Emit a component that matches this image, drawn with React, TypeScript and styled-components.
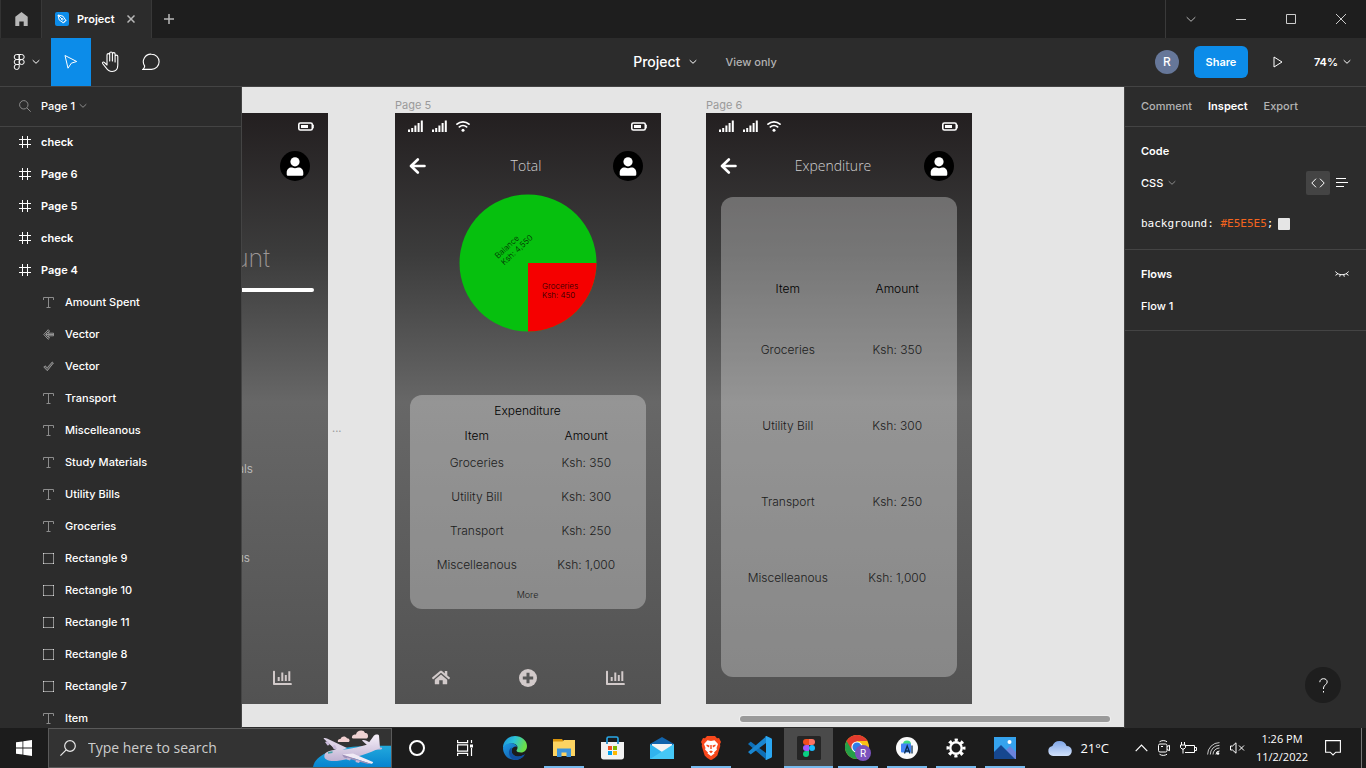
import React from "react";
import styled, { createGlobalStyle, css } from "styled-components";

const GlobalStyle = createGlobalStyle`
  *, *::before, *::after { box-sizing: border-box; }
  body { margin: 0; background: #2c2c2c; }
  button, input, select { font: inherit; color: inherit; margin: 0; }
  svg { display: block; flex: none; }
`;

const plainButton = css`
  border: 0;
  padding: 0;
  background: none;
  display: flex;
  align-items: center;
  justify-content: center;
  cursor: default;
`;

const Shell = styled.div`
  height: 100vh;
  display: flex;
  flex-direction: column;
  overflow: hidden;
  color: #fff;
  font-family: Inter, "Liberation Sans", sans-serif;
  font-size: 11px;
  line-height: 16px;
`;

/* ---------- title bar ---------- */

const TitleBar = styled.header`
  flex: none;
  height: 38px;
  display: flex;
  background: #1e1e1e;
  color: #b8b8b8;
`;

const HomeTab = styled.button`
  ${plainButton}
  width: 42px;
  background: #222;
  border-left: 1px solid #333;
  border-right: 1px solid #383838;
`;

const FileTab = styled.div`
  width: 110px;
  display: flex;
  align-items: center;
  gap: 8px;
  padding-left: 13px;
  background: #2c2c2c;
  border-right: 1px solid #383838;
  color: #fff;
  font-weight: 600;
`;

const TabClose = styled.button`
  ${plainButton}
  width: 16px;
  height: 16px;
  color: #b8b8b8;
`;

const NewTab = styled.button`
  ${plainButton}
  width: 34px;
`;

const WindowControls = styled.div`
  margin-left: auto;
  display: flex;
  border-left: 1px solid #3a3a3a;
`;

const WindowButton = styled.button`
  ${plainButton}
  width: 50px;
`;

/* ---------- toolbar ---------- */

const Toolbar = styled.nav`
  flex: none;
  height: 49px;
  display: flex;
  background: #2c2c2c;
  border-bottom: 1px solid #444;
`;

const ToolButton = styled.button<{ $active?: boolean; $wide?: boolean }>`
  ${plainButton}
  width: ${(p) => (p.$wide ? 51 : 40)}px;
  padding-left: ${(p) => (p.$wide ? 2 : 0)}px;
  gap: 6px;
  background: ${(p) => (p.$active ? "#0c8ce9" : "transparent")};
`;

const FileTitle = styled.div`
  flex: 1;
  display: flex;
  align-items: center;
  justify-content: center;
  padding-left: 84px;
  gap: 28px;
  color: #b3b3b3;
  font-weight: 500;
`;

const FileName = styled.button`
  ${plainButton}
  gap: 9px;
  color: #fff;
  font-size: 14px;
`;

const ToolbarEnd = styled.div`
  display: flex;
  align-items: center;
  padding-right: 15px;
`;

const UserBadge = styled.span`
  width: 24px;
  height: 24px;
  border-radius: 50%;
  background: #667799;
  font-size: 12px;
  line-height: 24px;
  font-weight: 500;
  text-align: center;
`;

const ShareButton = styled.button`
  ${plainButton}
  width: 54px;
  height: 32px;
  margin-left: 15px;
  border-radius: 6px;
  background: #0c8ce9;
  font-weight: 600;
`;

const PlayButton = styled.button`
  ${plainButton}
  width: 60px;
  height: 32px;
`;

const ZoomButton = styled.button`
  ${plainButton}
  margin-left: 6px;
  gap: 5px;
  font-weight: 600;
`;

/* ---------- workspace ---------- */

const Workspace = styled.main`
  flex: 1;
  min-height: 0;
  display: flex;
`;

const Layers = styled.aside`
  flex: none;
  width: 242px;
  overflow: hidden;
  background: #2c2c2c;
  border-right: 1px solid #444;
`;

const LayersHeader = styled.div`
  height: 40px;
  display: flex;
  align-items: center;
  gap: 10px;
  padding: 0 0 2px 19px;
  border-bottom: 1px solid #444;
`;

const PagePicker = styled.button`
  ${plainButton}
  gap: 4px;
  font-weight: 500;
`;

const LayerList = styled.ul`
  margin: 0;
  padding: 0;
  list-style: none;
`;

const LayerRow = styled.li<{ $top?: boolean }>`
  height: 32px;
  display: flex;
  align-items: center;
  gap: ${(p) => (p.$top ? 10 : 11)}px;
  padding: 0 0 2px ${(p) => (p.$top ? 19 : 43)}px;
  font-weight: ${(p) => (p.$top ? 600 : 500)};
`;

const Canvas = styled.section`
  flex: 1;
  min-width: 0;
  position: relative;
  overflow: hidden;
  background: #e5e5e5;
  border-bottom: 1px solid #2c2c2c;
`;

/* Frames sit at free positions on the design canvas. */
const Placed = styled.div<{ $x: number; $y: number }>`
  position: absolute;
  left: ${(p) => p.$x}px;
  top: ${(p) => p.$y}px;
`;

const FrameLabel = styled.div`
  height: 16px;
  color: #9a9a9a;
  line-height: 16px;
`;

const Frame = styled.article`
  width: 266px;
  height: 591px;
  display: flex;
  flex-direction: column;
  background: linear-gradient(180deg, #231f20 0%, #3c3c3c 24%, #676767 49%, #525252 100%);
  color: #fff;
  font-size: 12px;
`;

const StatusBar = styled.div`
  height: 26px;
  display: flex;
  align-items: center;
  gap: 9px;
  padding: 0 14px 0 13px;
`;

const Battery = styled.svg`
  margin-left: auto;
`;

const FrameHeader = styled.div`
  height: 54px;
  display: grid;
  grid-template-columns: 30px 1fr 30px;
  align-items: center;
  padding: 0 18px 0 14px;
  color: #fff;
`;

const FrameTitle = styled.div<{ $long?: boolean }>`
  padding-right: ${(p) => (p.$long ? 8 : 0)}px;
  color: #d0d0d0;
  font-family: "Open Sans", "Noto Sans", sans-serif;
  font-size: 14px;
  font-weight: 300;
  text-align: center;
`;

const PieBox = styled.div`
  display: flex;
  justify-content: center;
  padding-top: 1px;
`;

const Card = styled.div<{ $tall?: boolean }>`
  margin: ${(p) => (p.$tall ? 4 : 63)}px 15px 0;
  padding: ${(p) => (p.$tall ? "69px 5px 61px 12px" : "0 5px 0 12px")};
  border-radius: 12px;
  background: rgba(255, 255, 255, 0.3);
  color: #1c1c1c;
`;

const CardTable = styled.table<{ $tall?: boolean }>`
  width: 100%;
  table-layout: fixed;
  border-collapse: collapse;
  text-align: center;
  font-weight: 300;
  line-height: 16px;

  caption { height: 31px; padding-right: 8px; line-height: 31px; color: #000; }
  th, td { padding: 0; vertical-align: middle; }
  th { height: ${(p) => (p.$tall ? 46 : 20)}px; font-weight: 300; color: #000; }
  td { height: ${(p) => (p.$tall ? 76 : 34)}px; }
`;

const MoreLink = styled.a`
  display: block;
  height: 27px;
  padding-right: 8px;
  color: inherit;
  font-size: 9px;
  font-weight: 300;
  line-height: 25px;
  text-align: center;
  text-decoration: none;
`;

const FrameNav = styled.div`
  margin-top: auto;
  height: 36px;
  display: flex;
  justify-content: space-between;
  padding: 0 36px 0 37px;
  color: #d2caca;
`;

const Amount = styled.div`
  margin-top: 40px;
  height: 50px;
  padding-right: 58px;
  color: #9c9696;
  font-size: 25px;
  font-weight: 200;
  line-height: 50px;
  text-align: right;
`;

const Rule = styled.div`
  height: 4px;
  margin: 5px 14px 0;
  border-radius: 2px;
  background: #fff;
`;

const Category = styled.div<{ $first?: boolean }>`
  margin-top: ${(p) => (p.$first ? 167 : 69)}px;
  height: 20px;
  padding-right: ${(p) => (p.$first ? 75 : 78)}px;
  color: #c4c4c4;
  font-weight: 300;
  line-height: 20px;
  text-align: right;
`;

const ScrollThumb = styled.div`
  position: absolute;
  right: 14px;
  bottom: 5px;
  width: 42%;
  height: 6px;
  border-radius: 3px;
  background: #9a9a9a;
  box-shadow: 0 0 0 1px #eee;
`;

/* ---------- inspector ---------- */

const Inspector = styled.aside`
  flex: none;
  position: relative;
  width: 242px;
  background: #2c2c2c;
  border-left: 1px solid #444;
`;

const Tabs = styled.div`
  height: 40px;
  display: flex;
  align-items: center;
  gap: 16px;
  padding: 0 16px 2px;
  border-bottom: 1px solid #444;
`;

const Tab = styled.button<{ $active?: boolean }>`
  ${plainButton}
  color: ${(p) => (p.$active ? "#fff" : "#b3b3b3")};
  font-weight: ${(p) => (p.$active ? 600 : 500)};
`;

const Section = styled.section`
  padding: 8px 12px 8px 16px;
  border-bottom: 1px solid #444;
`;

const SectionRow = styled.div<{ $code?: boolean }>`
  height: ${(p) => (p.$code ? 42 : 32)}px;
  display: flex;
  align-items: ${(p) => (p.$code ? "flex-end" : "center")};
  padding-bottom: ${(p) => (p.$code ? 9 : 0)}px;
  font-weight: 500;
`;

const SectionTitle = styled.h2`
  margin: 0 auto 0 0;
  font-size: 11px;
  line-height: 16px;
  font-weight: 600;
`;

const LanguageSelect = styled.select`
  appearance: none;
  border: 0;
  padding: 0;
  width: 27px;
  background: none;
`;

const ViewToggle = styled.button<{ $active?: boolean }>`
  ${plainButton}
  width: 24px;
  height: 24px;
  border-radius: 2px;
  background: ${(p) => (p.$active ? "#444" : "transparent")};
`;

const HiddenToggle = styled.button`
  ${plainButton}
  width: 24px;
  height: 24px;
`;

const Spacer = styled.div`
  flex: 1;
`;

const Code = styled.code`
  font-family: "DejaVu Sans Mono", "Liberation Mono", monospace;
  font-size: 11px;
  line-height: 16px;
  font-weight: 400;
`;

const CodeValue = styled.span`
  color: #f4641e;
`;

const Swatch = styled.span`
  width: 12px;
  height: 12px;
  margin: 0 0 2px 5px;
  border-radius: 1px;
  background: #e5e5e5;
`;

const HelpButton = styled.button`
  ${plainButton}
  position: absolute;
  right: 25px;
  bottom: 25px;
  width: 36px;
  height: 36px;
  border-radius: 50%;
  background: #1e1e1e;
`;

/* ---------- taskbar ---------- */

const Taskbar = styled.footer`
  flex: none;
  height: 40px;
  display: flex;
  background: #1c1c1c;
  font-family: "Open Sans", "Noto Sans", sans-serif;
`;

const StartButton = styled.button`
  ${plainButton}
  width: 48px;
`;

const SearchBox = styled.label`
  width: 344px;
  display: flex;
  align-items: center;
  gap: 12px;
  padding-left: 11px;
  background: #333;
  border: 1px solid #5a5a5a;
`;

const SearchInput = styled.input`
  flex: 1;
  min-width: 0;
  border: 0;
  padding: 0;
  outline: 0;
  background: none;
  font-size: 14px;
  line-height: 20px;
  &::placeholder { color: #cdcdcd; opacity: 1; }
`;

const TaskButton = styled.button<{ $running?: boolean; $active?: boolean }>`
  ${plainButton}
  position: relative;
  width: 49px;
  background: ${(p) => (p.$active ? "#4a4a4a" : "transparent")};
  &::after {
    content: "";
    position: absolute;
    bottom: 0;
    left: ${(p) => (p.$active ? 0 : 5)}px;
    right: ${(p) => (p.$active ? 0 : 4)}px;
    height: 2px;
    background: ${(p) => (p.$running || p.$active ? "#76b9ed" : "transparent")};
  }
`;

const Tray = styled.div`
  margin-left: auto;
  display: flex;
  align-items: center;
`;

const Weather = styled.button`
  ${plainButton}
  gap: 8px;
  margin-right: 26px;
  font-size: 13px;
`;

const TrayIcons = styled.div`
  width: 110px;
  display: flex;
  align-items: center;
  justify-content: space-between;
`;

const Clock = styled.time`
  width: 74px;
  text-align: center;
  font-size: 11px;
  line-height: 18px;
`;

const Notifications = styled.button`
  ${plainButton}
  width: 43px;
  height: 40px;
  border-right: 1px solid #777;
  padding-right: 14px;
  margin-right: 4px;
`;

/* ---------- icons ---------- */

const Chevron = ({ color = "#fff", w = 8 }: { color?: string; w?: number }) => (
  <svg width={w} height={w / 2 + 2} viewBox={`0 0 ${w} ${w / 2 + 2}`} fill="none" stroke={color}>
    <path d={`M.7 1.2 L${w / 2} ${w / 2 + 0.3} L${w - 0.7} 1.2`} />
  </svg>
);

const HashIcon = () => (
  <svg width="12" height="12" viewBox="0 0 12 12" stroke="#fff" fill="none">
    <path d="M3.5 0v12M8.5 0v12M0 3.5h12M0 8.5h12" />
  </svg>
);

const TextIcon = () => (
  <svg width="11" height="11" viewBox="0 0 11 11" stroke="#8c8c8c" fill="none">
    <path d="M.5 3V.5h10V3M5.5.5v10M3.5 10.5h4" />
  </svg>
);

const RectIcon = () => (
  <svg width="11" height="11" viewBox="0 0 11 11" stroke="#8f8f8f" fill="none">
    <path d="M.5.5h10v10H.5z" />
    <path d="M0 .5h1M10 .5h1M0 10.5h1M10 10.5h1" stroke="#ddd" />
  </svg>
);

const ArrowVectorIcon = () => (
  <svg width="11" height="11" viewBox="0 0 11 11" stroke="#a0a0a0" fill="none" strokeWidth=".9">
    <path d="M5.200.700.800 5.500l4.400 4.800 1.300-1.300-1.700-2.200H10.500V4.200H4.800l1.700-2.200z" />
    <path d="M3 5.500h7M5.300 2.500 2.600 5.500l2.700 3" />
  </svg>
);

const CheckVectorIcon = () => (
  <svg width="11" height="11" viewBox="0 0 11 11" stroke="#a0a0a0" fill="#555" strokeWidth=".9">
    <path d="M.8 6 2 4.800l2.200 2L9.300 1l1.100 1L4.300 9.700z" />
  </svg>
);

const Signal = () => (
  <svg width="15" height="12" viewBox="0 0 15 12" fill="#fff">
    <path d="M0 9.500h2V12H0zM3.200 8h2v4h-2zM6.400 5.500h2V12h-2zM9.600 3h2v9h-2zM12.800.500h2V12h-2z" />
  </svg>
);

const Wifi = () => (
  <svg width="14" height="12" viewBox="0 0 14 12" fill="none" stroke="#fff" strokeWidth="1.700" strokeLinecap="round">
    <path d="M1 4.200a8.800 8.800 0 0 1 12 0M3.400 6.900a5.300 5.300 0 0 1 7.200 0" />
    <circle cx="7" cy="10.200" r="1.500" fill="#fff" stroke="none" />
  </svg>
);

const BatteryIcon = () => (
  <Battery width="16" height="9" viewBox="0 0 16 9">
    <rect x=".8" y="1" width="13.500" height="7" rx="1.600" fill="none" stroke="#fff" strokeWidth="1.600" />
    <rect x="3" y="3" width="7" height="3" fill="#fff" />
    <rect x="14" y="2.500" width="1.800" height="4" rx=".8" fill="#fff" />
  </Battery>
);

const BackIcon = () => (
  <svg width="17" height="16" viewBox="0 0 17 16" fill="none" stroke="#fff" strokeWidth="2.600" strokeLinecap="round" strokeLinejoin="round">
    <path d="M8.800 1.500 2 8l6.800 6.500M2.500 8h13" />
  </svg>
);

const AvatarIcon = () => (
  <svg width="30" height="30" viewBox="0 0 30 30">
    <circle cx="15" cy="15" r="15" fill="#000" />
    <circle cx="15" cy="10.800" r="4.600" fill="#fff" />
    <path d="M6.700 21.500c0-3 2.200-5 4.600-5 1.200 0 2 .7 3.700.7s2.500-.7 3.700-.7c2.400 0 4.600 2 4.600 5v1.700c0 1-.7 1.600-1.700 1.600H8.400c-1 0-1.700-.6-1.700-1.600z" fill="#fff" />
  </svg>
);

const HouseIcon = () => (
  <svg width="18" height="20" viewBox="0 0 18 20" fill="currentColor">
    <path d="M9 6.600 2.800 11.700v4c0 .4.200.6.600.6h3.800v-4h3.500v4h3.900c.4 0 .6-.2.6-.6v-4z" />
    <path d="M17.800 9.600 15.300 7.500V3.400c0-.3-.1-.4-.4-.4h-1.700c-.3 0-.4.100-.4.400v2L10 3c-.6-.5-1.400-.5-2 0L.2 9.600c-.2.200-.2.400-.1.600l.8 1c.2.200.4.200.6 0L8.700 5.100c.2-.1.400-.1.600 0l7.200 6.100c.2.200.4.200.6 0l.8-1c.2-.2.100-.4-.1-.6z" />
  </svg>
);

const AddIcon = () => (
  <svg width="18" height="20" viewBox="0 0 18 20">
    <circle cx="9" cy="10" r="9" fill="currentColor" />
    <path d="M9 4.800v10.400M3.800 10h10.400" stroke="#575757" strokeWidth="3" />
  </svg>
);

const ChartIcon = () => (
  <svg width="19" height="20" viewBox="0 0 19 20" fill="currentColor">
    <path d="M0 3.500c0-.5.300-.7.700-.7h.600c.4 0 .7.200.7.700v11.600h16c.5 0 .8.300.8.700v.600c0 .5-.3.700-.8.700H1.200c-.7 0-1.200-.5-1.200-1.200z" />
    <path d="M4.700 9h2v4h-2zM8.300 4.500h2V13h-2zM11.800 7h2v6h-2zM15.300 3.200h2V13h-2z" />
  </svg>
);

const Pie = () => (
  <svg width="138" height="138" viewBox="0 0 138 138" fontFamily="Inter, sans-serif" fontSize="8" fontWeight="300">
    <circle cx="69" cy="69" r="68.500" fill="#06c00e" />
    <path d="M69 69h68.500A68.500 68.500 0 0 1 69 137.500z" fill="#f50000" />
    <g transform="translate(39 65) rotate(-43)">
      <text fill="#022503">Balance</text>
      <text y="9" fill="#022503">Ksh: 4,550</text>
    </g>
    <text x="83" y="95" fill="#1c0000">Groceries</text>
    <text x="83" y="104" fill="#1c0000">Ksh: 450</text>
  </svg>
);

const Plane = () => (
  <svg width="78" height="38" viewBox="0 0 78 38">
    <defs>
      <linearGradient id="sea" x1="0" y1="0" x2="0" y2="1">
        <stop offset="0" stopColor="#22a9dc" />
        <stop offset="1" stopColor="#0784d0" />
      </linearGradient>
      <linearGradient id="fuselage" x1="0" y1="0" x2="0" y2="1">
        <stop offset="0" stopColor="#f7f1fa" />
        <stop offset="1" stopColor="#bfb1d2" />
      </linearGradient>
    </defs>
    <path d="M0 38C2 26 20 19 44 17.500c12-.8 24-.8 34-.8V38z" fill="url(#sea)" />
    <path d="M25 13c-1-2 1-3.500 2.500-3 .5-3 5-3.500 6.500-.8 3 0 3.500 3.800 1 3.800z" fill="#f0cfd0" />
    <path d="M39 9c-.500-3 2.500-4 4-3.500C43.500 1 51 0 52 4c3.500-1 4 5 1.500 5.500H40z" fill="#efd3d3" />
    <path d="M10.500 9.500c1-.8 2.500-.3 3.500 0L34 19l-9 4z" fill="#ddd2e6" />
    <path d="M12 13l3-1 1.500 4-2 .5zM19 17l3-1 2 4-3 .5z" fill="#c9bad9" />
    <path d="M68 18.500c1.500.3 1.500 1.500 0 2L56 21l-4-2z" fill="#c9bcda" />
    <path d="M11.500 26c1-3.500 6-5 12-5 10-.3 22-2.500 31-5.500L61 6.500c1-1.500 5-1.500 5 0L67 19c-10 5-25 10-40 12.500-9 1.500-17 0-15.500-5.500z" fill="url(#fuselage)" />
    <path d="M54 16 49 11.500c1-.8 3-.5 4 0l8 4z" fill="#e5dcee" />
    <path d="M29 25.500l11-1 20 8.500c.5 1-1 2-3 1.500z" fill="#f0eaf5" />
    <path d="M29 25.500l28 9-2 .5-24-6.500z" fill="#9d8fb8" />
    <path d="M15 23l4.500-.7v1.700l-4.500.8z" fill="#43a1a8" />
    <path d="M34 28.500l4 1-1 2-3.500-1zM43 31l4 1-1 2-3.500-1z" fill="#c6b8d6" />
  </svg>
);

const EdgeIcon = () => (
  <svg width="24" height="24" viewBox="0 0 24 24">
    <defs>
      <linearGradient id="edgeTop" x1="0" y1="0" x2="1" y2=".3">
        <stop offset="0" stopColor="#1b8fdc" />
        <stop offset=".5" stopColor="#2cc3d8" />
        <stop offset="1" stopColor="#6be048" />
      </linearGradient>
      <linearGradient id="edgeLow" x1="0" y1="0" x2="1" y2="1">
        <stop offset="0" stopColor="#1c9be6" />
        <stop offset="1" stopColor="#104a9a" />
      </linearGradient>
    </defs>
    <path d="M0 12C0 5 5.500 0 12 0s12 4.500 12 10c0 4-2.600 6.500-6 6.500-3 0-4.500-1-4.500-2 0-.8 1-1 1-3C14.500 9 12 7.500 9 7.500 4 7.500.5 11 0 12z" fill="url(#edgeTop)" />
    <path d="M0 12c.5-2.500 4-4.800 7.500-4.800 4 0 6.500 2 6.800 3.800C13 10 9 10.500 8.600 14.500c-.3 4 4 6.500 8.400 5.800 2-.3 4-1.500 5-2.300-1.500 3.500-5.500 6-10 6C5 24 0 18.500 0 12z" fill="url(#edgeLow)" />
    <path d="M8.600 14.500C8.200 18.500 12 21 16.500 20.400c2.200-.3 4-1.400 5-2.200-1.500 3.300-5 5.600-9 5.800-4-.8-7-4-6.500-8.500.2-1.500 1-3 2.700-4z" fill="#114f9f" />
  </svg>
);

const ExplorerIcon = () => (
  <svg width="22" height="20" viewBox="0 0 22 20">
    <path d="M0 1h9l2 3H0z" fill="#d9940c" />
    <path d="M0 3.500h9.500L11 2h11v16H0z" fill="#fcd462" />
    <path d="M4 19v-8.500h14V19h-4.500v-4.500h-5V19z" fill="#3b94dc" />
  </svg>
);

const StoreIcon = () => (
  <svg width="23" height="24" viewBox="0 0 23 24">
    <path d="M6 8V2.500C6 1.500 6.500 1 7.500 1h8c1 0 1.500.5 1.500 1.500V8" fill="none" stroke="#29a8e8" strokeWidth="1.600" />
    <path d="M0 6h23v15c0 1.500-1 2.500-2.500 2.500h-18C1 23.500 0 22.500 0 21z" fill="#f2f2f2" />
    <path d="M6 5.500V8M17 5.500V8" stroke="#1487c9" strokeWidth="1.600" />
    <path d="M7 10h4v4H7z" fill="#f25022" /><path d="M12 10h4v4h-4z" fill="#7fba00" />
    <path d="M7 15h4v4H7z" fill="#00a4ef" /><path d="M12 15h4v4h-4z" fill="#ffb900" />
  </svg>
);

const MailIcon = () => (
  <svg width="24" height="22" viewBox="0 0 24 22">
    <path d="M0 7 12 0l12 7v3H0z" fill="#1264ac" />
    <path d="M2 7h20v8H2z" fill="#f4f4f4" />
    <path d="M0 7l12 8 12-8v15H0z" fill="#31b4ee" />
    <path d="M0 22 24 7v15z" fill="#50d0fa" opacity=".7" />
  </svg>
);

const BraveIcon = () => (
  <svg width="20" height="24" viewBox="0 0 20 24">
    <path d="M6 0h8l2 2.300 2-.3 2 4-1 2 .3 2-2.800 9C16 20.500 12 23.500 10 24c-2-.5-6-3.500-6.500-5L.7 10 1 8 0 6l2-4 2 .3z" fill="#f8481c" />
    <path d="M10 5l3.500-.8L17 8l-1.500 4 .5 1.500-3 3 .5 1L10 20l-3.500-2.500.5-1-3-3 .5-1.500L3 8l3.500-3.800z" fill="#fff" />
    <path d="M5.500 8.500l3 1-.5 2-2.500-1.500zM14.500 8.500l-3 1 .5 2 2.500-1.500zM8 15.500l2-1 2 1-2 1.700zM9.300 9h1.400v4H9.300z" fill="#f8481c" />
  </svg>
);

const VsCodeIcon = () => (
  <svg width="24" height="24" viewBox="0 0 24 24">
    <path d="M0 8l2.200-2c.3-.3.700-.3 1 0L18 17v6.500z" fill="#0f70b8" />
    <path d="M0 16l2.200 2c.3.300.700.300 1 0L18 7V.500z" fill="#1a86d0" />
    <path d="M17 23.700c.6.400 1.200.4 1.800.1l4.400-2.100c.5-.2.800-.7.800-1.300V3.600c0-.6-.3-1.100-.8-1.300L18.800.2c-.6-.3-1.200-.3-1.800.1.600-.2 1 .2 1 .8v21.800c0 .6-.4 1-1 .8z" fill="#2aa7f2" />
  </svg>
);

const FigmaIcon = () => (
  <svg width="24" height="24" viewBox="0 0 24 24">
    <rect width="24" height="24" rx="1.500" fill="#252525" />
    <path d="M9 3h3v6H9a3 3 0 0 1 0-6z" fill="#f24e1e" />
    <path d="M12 3h3a3 3 0 0 1 0 6h-3z" fill="#ff7262" />
    <path d="M9 9h3v6H9a3 3 0 0 1 0-6z" fill="#a259ff" />
    <circle cx="15" cy="12" r="3" fill="#1abcfe" />
    <path d="M9 15h3v3a3 3 0 1 1-3-3z" fill="#0acf83" />
  </svg>
);

const ChromeIcon = () => (
  <svg width="26" height="26" viewBox="0 0 26 26">
    <circle cx="12" cy="12" r="12" fill="#fbc116" />
    <path d="M12 12 1.600 6A12 12 0 0 0 12 24l5-9z" fill="#259f48" />
    <path d="M1.600 6A12 12 0 0 1 22.400 6H12l-5 9z" fill="#e33b2e" />
    <circle cx="12" cy="12" r="5.600" fill="#fff" />
    <circle cx="12" cy="12" r="4.500" fill="#2f7de9" />
    <circle cx="18" cy="18" r="8" fill="#7b52bd" />
    <text x="18" y="22" textAnchor="middle" fontFamily="Roboto, sans-serif" fontSize="10" fill="#fff">R</text>
  </svg>
);

const AndroidStudioIcon = () => (
  <svg width="22" height="22" viewBox="0 0 22 22">
    <circle cx="11" cy="11" r="11" fill="#fafafa" />
    <path d="M7 7.500a4 4 0 0 1 8 0z" fill="#3ddc84" />
    <rect x="5" y="6.500" width="10" height="9" rx="1" fill="#4285f4" />
    <path d="M8.500 16.500 11.200 9l2.800 7.500M9.500 14h3.500M16 8.500v8" fill="none" stroke="#0b2e4f" strokeWidth="1.300" />
  </svg>
);

const GearIcon = () => (
  <svg width="20" height="20" viewBox="0 0 20 20" fill="none" stroke="#fff">
    <circle cx="10" cy="10" r="5.700" strokeWidth="2.400" />
    <circle cx="10" cy="10" r="8" strokeWidth="3" strokeDasharray="3.140 3.140" strokeDashoffset="1.570" />
  </svg>
);

const PhotosIcon = () => (
  <svg width="22" height="22" viewBox="0 0 22 22">
    <rect width="22" height="22" fill="#35a3ee" />
    <path d="M11 14 16 9l6 6v7H11z" fill="#6a83dc" />
    <path d="M0 15l7-7 14 14H0z" fill="#16478f" />
    <circle cx="15.500" cy="5" r="2" fill="#fff" />
  </svg>
);

/* ---------- data ---------- */

type Kind = "frame" | "text" | "arrow" | "check" | "rect";

const layerIcons: Record<Kind, React.FC> = {
  frame: HashIcon,
  text: TextIcon,
  arrow: ArrowVectorIcon,
  check: CheckVectorIcon,
  rect: RectIcon,
};

const layers: [Kind, string][] = [
  ["frame", "check"],
  ["frame", "Page 6"],
  ["frame", "Page 5"],
  ["frame", "check"],
  ["frame", "Page 4"],
  ["text", "Amount Spent"],
  ["arrow", "Vector"],
  ["check", "Vector"],
  ["text", "Transport"],
  ["text", "Miscelleanous"],
  ["text", "Study Materials"],
  ["text", "Utility Bills"],
  ["text", "Groceries"],
  ["rect", "Rectangle 9"],
  ["rect", "Rectangle 10"],
  ["rect", "Rectangle 11"],
  ["rect", "Rectangle 8"],
  ["rect", "Rectangle 7"],
  ["text", "Item"],
];

const expenses = [
  ["Groceries", "Ksh: 350"],
  ["Utility Bill", "Ksh: 300"],
  ["Transport", "Ksh: 250"],
  ["Miscelleanous", "Ksh: 1,000"],
];

const apps: { name: string; icon: React.FC; running?: boolean; active?: boolean }[] = [
  { name: "Edge", icon: EdgeIcon },
  { name: "File Explorer", icon: ExplorerIcon, running: true },
  { name: "Store", icon: StoreIcon },
  { name: "Mail", icon: MailIcon },
  { name: "Brave", icon: BraveIcon, running: true },
  { name: "Visual Studio Code", icon: VsCodeIcon },
  { name: "Figma", icon: FigmaIcon, active: true },
  { name: "Chrome", icon: ChromeIcon, running: true },
  { name: "Android Studio", icon: AndroidStudioIcon, running: true },
  { name: "Settings", icon: GearIcon, running: true },
  { name: "Photos", icon: PhotosIcon, running: true },
];

/* ---------- parts ---------- */

const PhoneTop = ({ title, back, long }: { title?: string; back?: boolean; long?: boolean }) => (
  <>
    <StatusBar>
      <Signal />
      <Signal />
      <Wifi />
      <BatteryIcon />
    </StatusBar>
    <FrameHeader>
      <div>{back && <BackIcon />}</div>
      <FrameTitle $long={long}>{title}</FrameTitle>
      <AvatarIcon />
    </FrameHeader>
  </>
);

const PhoneNav = () => (
  <FrameNav>
    <HouseIcon />
    <AddIcon />
    <ChartIcon />
  </FrameNav>
);

const ExpenseTable = ({ tall, caption }: { tall?: boolean; caption?: string }) => (
  <CardTable $tall={tall}>
    {caption && <caption>{caption}</caption>}
    <thead>
      <tr>
        <th>Item</th>
        <th>Amount</th>
      </tr>
    </thead>
    <tbody>
      {expenses.map(([item, amount]) => (
        <tr key={item}>
          <td>{item}</td>
          <td>{amount}</td>
        </tr>
      ))}
    </tbody>
  </CardTable>
);

export default function App() {
  return (
    <Shell>
      <GlobalStyle />
      <TitleBar>
        <HomeTab aria-label="Home">
          <svg width="13" height="14" viewBox="0 0 13 14" fill="#b8b8b8">
            <path d="M6.500 0 .3 4.700V14h4V9.500h4.400V14h4V4.700z" />
          </svg>
        </HomeTab>
        <FileTab>
          <svg width="14" height="14" viewBox="0 0 14 14" fill="none" stroke="#fff">
            <rect width="14" height="14" rx="2" fill="#0c8ce9" stroke="none" />
            <path d="M3 3l5 1.200 2.700 4-2.500 2.500-4-2.700zM3 3l4 4" />
            <circle cx="7.300" cy="7.300" r=".8" />
            <path d="M8.300 11.200l3-3" />
          </svg>
          <span>Project</span>
          <TabClose aria-label="Close tab">
            <svg width="8" height="8" viewBox="0 0 8 8" stroke="#b8b8b8" strokeWidth="1.500">
              <path d="M.5.5l7 7M7.500.5l-7 7" />
            </svg>
          </TabClose>
        </FileTab>
        <NewTab aria-label="New tab">
          <svg width="10" height="10" viewBox="0 0 10 10" stroke="#b8b8b8" strokeWidth="1.500">
            <path d="M5 0v10M0 5h10" />
          </svg>
        </NewTab>
        <WindowControls>
          <WindowButton aria-label="More"><Chevron color="#b8b8b8" w={10} /></WindowButton>
          <WindowButton aria-label="Minimize">
            <svg width="10" height="10" viewBox="0 0 10 10" stroke="#ccc"><path d="M0 5.500h10" /></svg>
          </WindowButton>
          <WindowButton aria-label="Maximize">
            <svg width="10" height="10" viewBox="0 0 10 10" stroke="#ccc" fill="none"><path d="M.5.5h9v9h-9z" /></svg>
          </WindowButton>
          <WindowButton aria-label="Close">
            <svg width="10" height="10" viewBox="0 0 10 10" stroke="#ccc"><path d="M0 0l10 10M10 0L0 10" /></svg>
          </WindowButton>
        </WindowControls>
      </TitleBar>

      <Toolbar>
        <ToolButton $wide aria-label="Main menu">
          <svg width="13" height="16" viewBox="0 0 13 16" fill="none" stroke="#fff">
            <path d="M6.200.5H3.700a2.500 2.500 0 0 0 0 5h2.500zM6.200.5h2.500a2.500 2.500 0 0 1 0 5H6.200zM6.200 5.500H3.700a2.500 2.500 0 0 0 0 5h2.500zM6.200 10.500H3.700a2.500 2.500 0 1 0 2.500 2.500z" />
            <circle cx="8.700" cy="8" r="2.500" />
          </svg>
          <Chevron />
        </ToolButton>
        <ToolButton $active aria-label="Move">
          <svg width="14" height="16" viewBox="0 0 14 16" fill="none" stroke="#fff">
            <path d="M1 1.500l11.700 6-5.400 1.700L4 14.200z" />
          </svg>
        </ToolButton>
        <ToolButton aria-label="Hand tool">
          <svg width="20" height="22" viewBox="0 0 20 22" fill="none" stroke="#fff" strokeWidth="1.100" strokeLinejoin="round">
            <path d="M6 12.500V4a1.300 1.300 0 0 1 2.700 0v6V2.300a1.300 1.300 0 0 1 2.700 0V10 3a1.300 1.300 0 0 1 2.700 0v8-5.500a1.300 1.300 0 0 1 2.700 0V14c0 4-2 6.500-5.700 6.500-3.200 0-4.700-1.500-6-3.700L1.600 12.500c-.6-1.100.8-2 1.700-1.200L6 14z" />
          </svg>
        </ToolButton>
        <ToolButton aria-label="Comment tool">
          <svg width="18" height="18" viewBox="0 0 18 18" fill="none" stroke="#fff" strokeWidth="1.100">
            <path d="M9.500 1.200a7.600 7.600 0 1 1 0 15.200H.8c1-.6 1.700-1.700 1.900-3.300A7.600 7.600 0 0 1 9.500 1.200z" />
          </svg>
        </ToolButton>
        <FileTitle>
          <FileName>Project <Chevron /></FileName>
          <span>View only</span>
        </FileTitle>
        <ToolbarEnd>
          <UserBadge>R</UserBadge>
          <ShareButton>Share</ShareButton>
          <PlayButton aria-label="Present">
            <svg width="10" height="12" viewBox="0 0 10 12" fill="none" stroke="#fff">
              <path d="M1 1l8 5-8 5z" />
            </svg>
          </PlayButton>
          <ZoomButton>74% <Chevron /></ZoomButton>
        </ToolbarEnd>
      </Toolbar>

      <Workspace>
        <Layers>
          <LayersHeader>
            <svg width="12" height="12" viewBox="0 0 12 12" fill="none" stroke="#8c8c8c">
              <circle cx="4.800" cy="4.800" r="4.200" />
              <path d="M8 8l3.700 3.700" />
            </svg>
            <PagePicker>Page 1 <Chevron color="#8c8c8c" w={8} /></PagePicker>
          </LayersHeader>
          <LayerList>
            {layers.map(([kind, name], i) => {
              const Icon = layerIcons[kind];
              return (
                <LayerRow key={i} $top={kind === "frame"}>
                  <Icon />
                  {name}
                </LayerRow>
              );
            })}
          </LayerList>
        </Layers>

        <Canvas>
          <Placed $x={-180} $y={26}>
            <Frame>
              <PhoneTop />
              <Amount>Amount</Amount>
              <Rule />
              <Category $first>Study Materials</Category>
              <Category>Miscelleanous</Category>
              <PhoneNav />
            </Frame>
          </Placed>
          <Placed $x={90} $y={333}>
            <FrameLabel>...</FrameLabel>
          </Placed>
          <Placed $x={153} $y={10}>
            <FrameLabel>Page 5</FrameLabel>
            <Frame>
              <PhoneTop title="Total" back />
              <PieBox><Pie /></PieBox>
              <Card>
                <ExpenseTable caption="Expenditure" />
                <MoreLink href="#more">More</MoreLink>
              </Card>
              <PhoneNav />
            </Frame>
          </Placed>
          <Placed $x={464} $y={10}>
            <FrameLabel>Page 6</FrameLabel>
            <Frame>
              <PhoneTop title="Expenditure" back long />
              <Card $tall>
                <ExpenseTable tall />
              </Card>
            </Frame>
          </Placed>
          <ScrollThumb />
        </Canvas>

        <Inspector>
          <Tabs>
            <Tab>Comment</Tab>
            <Tab $active>Inspect</Tab>
            <Tab>Export</Tab>
          </Tabs>
          <Section>
            <SectionRow><SectionTitle>Code</SectionTitle></SectionRow>
            <SectionRow>
              <LanguageSelect aria-label="Language" defaultValue="CSS">
                <option>CSS</option>
              </LanguageSelect>
              <Chevron color="#8c8c8c" />
              <Spacer />
              <ViewToggle $active aria-label="Code view">
                <svg width="14" height="10" viewBox="0 0 14 10" fill="none" stroke="#fff">
                  <path d="M5 .7.8 5 5 9.300M9 .7 13.200 5 9 9.300" />
                </svg>
              </ViewToggle>
              <ViewToggle aria-label="List view">
                <svg width="12" height="10" viewBox="0 0 12 10" stroke="#fff">
                  <path d="M0 .5h10M0 4.500h12M0 8.500h8" />
                </svg>
              </ViewToggle>
            </SectionRow>
            <SectionRow $code>
              <Code>background: <CodeValue>#E5E5E5</CodeValue>;</Code>
              <Swatch />
            </SectionRow>
          </Section>
          <Section>
            <SectionRow>
              <SectionTitle>Flows</SectionTitle>
              <HiddenToggle aria-label="Show flows">
                <svg width="14" height="6" viewBox="0 0 14 6" fill="none" stroke="#fff">
                  <path d="M.5.5c2.500 4.300 10.500 4.300 13 0M2.800 2.800 .5 4.300M11.200 2.800l2.300 1.500M5.300 3.700l-.6 2M8.700 3.700l.6 2" />
                </svg>
              </HiddenToggle>
            </SectionRow>
            <SectionRow>Flow 1</SectionRow>
          </Section>
          <HelpButton aria-label="Help">
            <svg width="9" height="15" viewBox="0 0 9 15" fill="none" stroke="#fff">
              <path d="M.8 4.200C.8 2 2.400.7 4.500.7s3.700 1.300 3.700 3.300C8.200 6.800 4.500 6.800 4.500 10v1M4.500 13v1.500" />
            </svg>
          </HelpButton>
        </Inspector>
      </Workspace>

      <Taskbar>
        <StartButton aria-label="Start">
          <svg width="16" height="16" viewBox="0 0 16 16" fill="#fff">
            <path d="M0 2.300 6.500 1.400v6.200H0zM7.300 1.300 16 0v7.600H7.300zM0 8.400h6.500v6.200L0 13.700zM7.300 8.400H16V16l-8.700-1.300z" />
          </svg>
        </StartButton>
        <SearchBox>
          <svg width="16" height="16" viewBox="0 0 16 16" fill="none" stroke="#e8e8e8" strokeWidth="1.200">
            <circle cx="10" cy="6" r="5.300" />
            <path d="M6.200 9.800.4 15.600" />
          </svg>
          <SearchInput type="text" placeholder="Type here to search" aria-label="Search" />
          <Plane />
        </SearchBox>
        <TaskButton aria-label="Cortana">
          <svg width="16" height="16" viewBox="0 0 16 16" fill="none" stroke="#fff" strokeWidth="2">
            <circle cx="8" cy="8" r="7" />
          </svg>
        </TaskButton>
        <TaskButton aria-label="Task view">
          <svg width="17" height="16" viewBox="0 0 17 16" fill="none" stroke="#fff" strokeWidth="1.200">
            <path d="M.6 0v2.600h10V0M.6 16v-2.600h10V16M.6 4.800h10v6.400H.6zM14.500 0v3M14.500 8v8" />
            <path d="M13 4.500h3v3h-3z" fill="#fff" stroke="none" />
          </svg>
        </TaskButton>
        {apps.map(({ name, icon: Icon, running, active }) => (
          <TaskButton key={name} aria-label={name} $running={running} $active={active}>
            <Icon />
          </TaskButton>
        ))}
        <Tray>
          <Weather>
            <svg width="24" height="16" viewBox="0 0 24 16">
              <defs>
                <linearGradient id="cloud" x1="0" y1="0" x2="0" y2="1">
                  <stop offset="0" stopColor="#7fa6e8" />
                  <stop offset="1" stopColor="#d3e2fb" />
                </linearGradient>
              </defs>
              <path d="M5 16a5 5 0 0 1-.6-9.900A7.500 7.500 0 0 1 18.600 6 5 5 0 0 1 19 16z" fill="url(#cloud)" />
            </svg>
            21°C
          </Weather>
          <TrayIcons>
            <svg width="13" height="8" viewBox="0 0 13 8" fill="none" stroke="#fff" strokeWidth="1.200"><path d="M.7 7.200 6.500 1.200l5.800 6" /></svg>
            <svg width="12" height="16" viewBox="0 0 12 16" fill="none" stroke="#fff">
              <rect x=".5" y="4" width="8.500" height="8" rx="1.500" />
              <path d="M9 6.500l2.500-1.200v5.400L9 9.500M1.500 1.800C3.500.2 7 .2 9 1.800M1.500 14.200c2 1.600 5.500 1.600 7.500 0M3 6.500h2" />
            </svg>
            <svg width="17" height="12" viewBox="0 0 17 12" fill="none" stroke="#fff">
              <path d="M6 3.500h8.500v7H5M15 5.500h1.500v3H15M1.500 0v3M4.500 0v3M.5 3h5v2.500l-1.500 1.500H2L.5 5.500zM3 7v4.500" />
            </svg>
            <svg width="13" height="13" viewBox="0 0 13 13" fill="none" stroke="#fff">
              <path d="M9 12.500a3.500 3.500 0 0 1 3.500-3.500" />
              <path d="M6 12.500A6.500 6.500 0 0 1 12.500 6M3.300 12.500a9.200 9.200 0 0 1 9.200-9.200M.6 12.500A11.900 11.900 0 0 1 12.500.6" stroke="#c8c8c8" />
              <circle cx="11" cy="11.500" r="1.300" fill="#fff" stroke="none" />
            </svg>
            <svg width="15" height="12" viewBox="0 0 15 12" fill="none" stroke="#fff">
              <path d="M.5 4h2L6 .8v10.400L2.500 8h-2zM9 3.500l5 5M14 3.500l-5 5" />
            </svg>
          </TrayIcons>
          <Clock>1:26 PM<br />11/2/2022</Clock>
          <Notifications aria-label="Notifications">
            <svg width="16" height="16" viewBox="0 0 16 16" fill="none" stroke="#fff" strokeWidth="1.100">
              <path d="M.6.6h14.800v11.600h-4.600L8 15l-2.800-2.800H.6z" />
            </svg>
          </Notifications>
        </Tray>
      </Taskbar>
    </Shell>
  );
}
